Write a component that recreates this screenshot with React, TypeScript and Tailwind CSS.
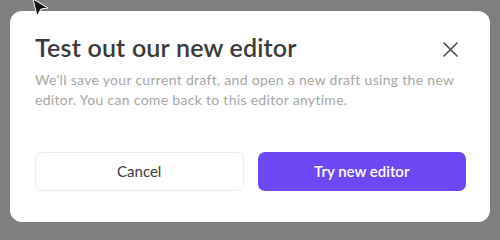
export default function App() {
  return (
    <div className="relative w-[500px] h-[240px] bg-[#7f7f7f] overflow-hidden" style={{ fontFamily: "Lato, 'Open Sans', sans-serif" }}>
      <div className="ml-[10px] mt-[11px] w-[480px] h-[211px] bg-white rounded-[12px] pl-[25px] pr-[24px] pt-[20px]">
        <div className="flex items-start justify-between">
          <h1 className="text-[25px] leading-[32px] font-semibold text-[#3a3a3a] tracking-[0.2px]">Test out our new editor</h1>
          <button className="w-[20px] h-[20px] mt-[8px] flex items-center justify-center mr-[6px] text-[#444]">
            <svg width="15" height="15" viewBox="0 0 15 15" fill="none" stroke="currentColor" strokeWidth="1.5" strokeLinecap="round">
              <path d="M1 1L14 14M14 1L1 14" />
            </svg>
          </button>
        </div>
        <p className="mt-[7px] mr-[-6px] text-[14px] leading-[20px] text-[#a6a6a6] tracking-[0.3px]">
          We'll save your current draft, and open a new draft using the new editor. You can come back to this editor anytime.
        </p>
        <div className="mt-[42px] grid grid-cols-2 gap-[14px]">
          <button className="h-[39px] rounded-[7px] border border-[#ebebeb] bg-white text-[15px] text-[#3a3a3a]">Cancel</button>
          <button className="h-[39px] rounded-[7px] bg-[#6e48f5] text-[15px] font-semibold text-white">Try new editor</button>
        </div>
      </div>
      <svg className="absolute left-[32px] top-[-2px]" width="18" height="20" viewBox="0 0 18 20">
        <path d="M1 1 L16 10 L9 11 L5 18 Z" fill="#111" stroke="#fff" strokeWidth="1" strokeLinejoin="round" />
      </svg>
    </div>
  );
}
